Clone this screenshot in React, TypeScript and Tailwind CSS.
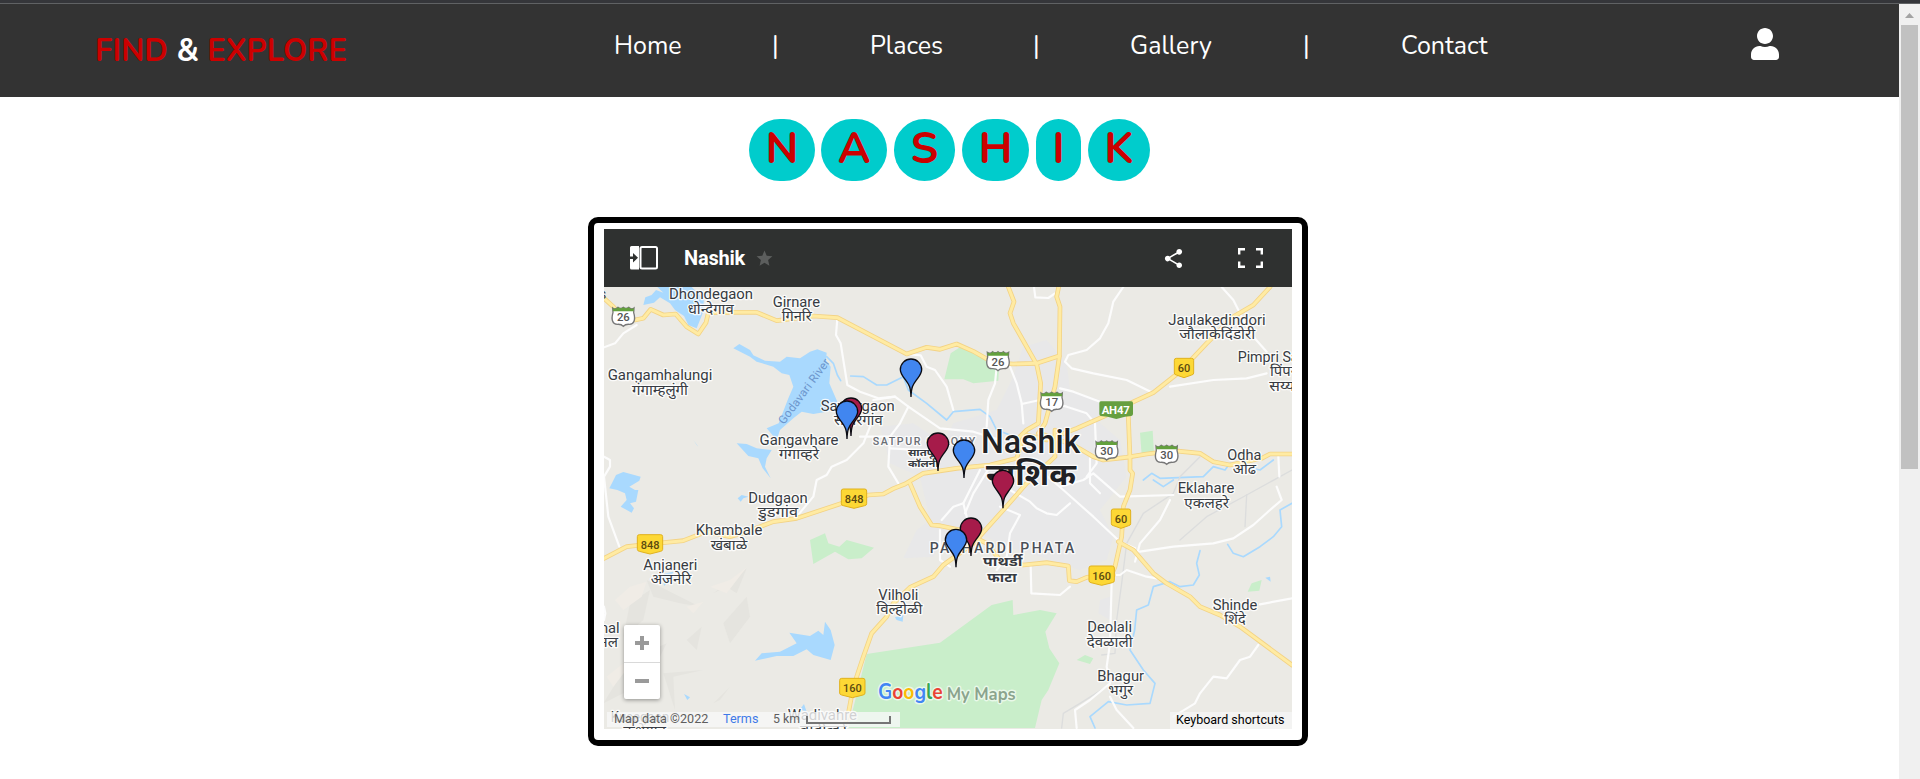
import { FaUser } from "react-icons/fa";
import { MdShare, MdStar } from "react-icons/md";

const water = [
  "190,285 196,262 215,255 228,240 250,248 232,231 335,231 372,268 368,310 350,355 325,345 312,318 285,300 270,280 240,262 222,278",
  "460,415 478,402 510,420 520,436 555,452 600,455 620,440 660,445 690,425 712,418 740,428 738,452 752,470 748,520 772,575 740,605 700,612 665,605 640,625 600,660 590,690 560,655 596,640 625,565 640,530 628,495 605,490 580,470 530,455 510,440",
  "470,700 500,702 530,715 575,720 560,745 555,770 572,805 548,775 535,745 505,738",
  "108,795 130,786 182,800 178,812 148,830 165,840 175,840 168,875 150,880 162,895 155,908 122,890 140,870 135,850 112,840 88,835 98,815",
  "525,1352 545,1330 600,1325 650,1300 628,1268 690,1278 715,1262 730,1275 735,1235 752,1260 764,1305 752,1350 700,1335 680,1318 640,1338 590,1338",
  "473,865 485,855 505,860 490,865 482,875",
  "340,690 355,710 350,705",
  "312,1452 330,1462 322,1470",
  "248,1092 280,1085 270,1110 252,1128",
  "945,1222 970,1215 968,1235 950,1230",
  "2056,1103 2070,1100 2072,1115",
  "660,1498 672,1482 680,1505",
];

const greens = [
  "690,990 735,970 745,1000 778,1010 800,990 882,1013 845,1045 805,1048 765,1025 700,1062",
  "1093,508 1112,430 1140,412 1215,438 1258,452 1255,512 1180,520 1150,508",
  "805,1554 860,1332 1080,1298 1235,1185 1298,1170 1300,1215 1380,1200 1430,1210 1396,1265 1408,1315 1438,1360 1405,1440 1385,1470 1365,1554",
  "1680,668 1718,662 1722,730 1685,735",
  "1490,1350 1515,1335 1540,1345 1530,1362",
  "2003,1145 2015,1120 2045,1110 2038,1142",
];

const urban = [
  "900,650 1000,640 1090,700 1120,640 1250,600 1300,500 1330,410 1400,390 1460,460 1470,540 1560,570 1560,640 1620,690 1640,800 1560,900 1600,980 1580,1050 1500,1080 1380,1040 1280,1010 1180,960 1090,985 1060,1040 970,1045 1010,960 1050,930 1020,800 930,760",
  "1560,1170 1590,1160 1590,1230 1555,1210",
];

const hills = [
  "150,1180 210,1140 190,1230 130,1280",
  "400,1150 500,1075 470,1150 440,1130",
  "430,1240 500,1160 510,1220 450,1300",
  "320,1290 365,1250 350,1320",
  "70,1480 150,1350 260,1300 200,1420 130,1450",
  "250,1390 370,1380 280,1400 285,1500",
  "400,1480 450,1430 420,1470",
  "200,1110 260,1140 360,1190 300,1180 220,1160",
];

const ridges = [
  "105,1170 150,1130 200,1115 185,1160 130,1200",
  "390,1130 450,1110 500,1072 440,1150",
  "320,1190 370,1175 340,1210",
  "80,1400 130,1360 150,1365 100,1430",
];

const streams = [
  "740,440 760,460 772,495 782,512",
  "812,498 850,500 890,525 920,525 970,500 985,540 1040,580 1100,630 1120,605 1200,598 1230,620 1250,660 1290,675",
  "2136,880 2100,900 2105,950 2080,980 2040,1010 1990,1040 1960,1030 1943,1003",
  "1860,1022 1850,1060 1858,1095 1840,1125 1800,1130 1770,1115 1720,1130 1705,1185 1670,1200 1664,1260 1650,1320 1690,1380 1725,1420 1710,1480 1640,1485 1585,1475 1530,1520 1545,1554",
  "1690,810 1715,790 1740,805 1870,800 1900,770 1935,780 1950,760 2040,780 2080,750",
  "1720,810 1750,830 1780,810",
];

const minor = [
  "72,412 105,400 130,370 170,345",
  "772,325 768,375 782,400 802,525 840,545 895,565 945,560 985,590 1080,655 1180,665 1260,690",
  "980,432 1022,436 1040,470 1065,480 1100,530 1120,600",
  "985,590 960,640 930,680 925,770 955,820",
  "945,560 880,570",
  "870,650 850,700 800,750 755,770 740,795 710,810 700,860 650,920",
  "72,740 90,750 90,770 72,800 85,920 118,1010",
  "72,1190 76,1210 72,1230",
  "1362,231 1366,262 1405,264 1425,250",
  "1630,231 1600,275 1585,340 1560,385 1520,420 1465,435 1455,455 1475,475 1540,490 1640,510 1712,545",
  "1770,530 1900,510 2000,505 2060,490",
  "1925,231 1960,270 1990,330 2020,380 2060,425",
  "1250,470 1245,520 1225,570 1220,650",
  "1290,470 1310,520 1325,580 1330,640",
  "1325,582 1380,570 1460,590 1520,610 1545,640 1550,760 1520,800",
  "1440,535 1480,545 1560,575",
  "840,680 930,680",
  "930,715 1020,720 1080,745",
  "1200,780 1150,880 1120,890 1085,930",
  "1150,880 1165,940 1145,990",
  "1230,770 1180,850 1155,910",
  "1290,840 1350,875 1370,895 1400,910 1430,915 1470,880",
  "1260,890 1320,915 1290,970 1280,1040 1250,1080",
  "1380,780 1450,840 1540,920 1620,995 1665,1015",
  "1440,830 1510,810 1540,790 1620,860 1780,855",
  "1770,870 1740,930 1680,1000 1665,1055",
  "1680,1025 1780,1010 1900,1000 1960,985 2020,945 2070,900 2105,870 2090,830",
  "1595,1115 1590,1300 1580,1370 1590,1420",
  "1560,1095 1620,1095 1640,1080 1700,1100 1730,1105",
  "1352,1065 1354,1150 1440,1155 1470,1130",
  "2040,1183 2136,1165",
  "1590,1420 1530,1470 1485,1500 1490,1554",
  "1590,1460 1610,1500 1660,1554",
  "2035,1305 2010,1340 1980,1350 1940,1405 1900,1400 1860,1450 1845,1480 1780,1520",
  "1080,960 1080,1050 1110,1070",
  "1530,745 1530,820 1560,850",
  "2095,740 2098,800",
];

const rails = [
  "2136,780 2000,855 1880,920 1800,990",
  "2000,855 1995,950",
  "1860,740 1830,770 1800,800 1780,850 1690,910 1640,1000 1625,1120 1610,1230 1605,1330 1565,1335",
  "1580,1430 1500,1480 1450,1510 1445,1554",
];

const major = [
  "72,265 100,290 130,325 165,330 190,325 212,298 250,315 287,312 320,350 355,372 378,338 385,308 470,307 530,307 590,332 700,318 772,323 980,432 1040,412 1080,418 1130,402 1180,424 1240,458 1300,462 1370,460 1437,438",
  "1285,231 1302,275 1290,310 1300,340 1370,463 1382,520 1375,640 1340,660 1310,690",
  "1436,231 1430,260 1440,290 1438,440 1425,530 1395,640 1375,670",
  "2070,231 2020,285 1960,320 1880,400 1800,485 1720,548 1650,580 1570,620 1490,655 1400,690 1340,675",
  "72,1045 140,1010 210,1002 310,992 380,965 450,980 500,965 580,935 650,925 800,875 865,855 910,852 940,836 975,822 1030,790 1130,775 1230,765 1310,745 1330,680",
  "990,820 1020,890 1055,945 1080,947 1140,960 1220,1000 1260,1050 1330,1065 1400,1058 1465,1068 1468,1112 1490,1115 1520,1102 1600,1095",
  "1425,660 1425,740 1340,820 1270,900 1180,1000 1090,1065 1060,1100 990,1132 940,1180 920,1220 875,1270 850,1340 820,1430 805,1510 790,1554",
  "1380,670 1480,705 1540,740 1570,750 1640,742 1700,732 1780,722 1860,730 1900,755 1950,765 2045,745 2070,732 2136,732",
  "1645,620 1650,745 1650,780 1658,790 1650,840 1630,890 1625,980 1605,1070 1595,1095",
  "1615,995 1660,1020 1720,1090 1760,1120 1830,1160 1860,1190 1920,1215 1980,1250 2136,1365",
];

type Label = { x: number; y: number; w: number; t: string; s?: number; weight?: number; fill?: string };

/* x is the centre of the label, y its baseline, w its drawn width */
const labels: Label[] = [
  { x: 393, y: 268, w: 252, t: "Dhondegaon" },
  { x: 392, y: 311, w: 138, t: "धोन्देगाव", s: 42 },
  { x: 649, y: 292, w: 142, t: "Girnare" },
  { x: 650, y: 334, w: 90, t: "गिनरि", s: 42 },
  { x: 240, y: 511, w: 314, t: "Gangamhalungi" },
  { x: 240, y: 554, w: 168, t: "गंगाम्हलुंगी", s: 42 },
  { x: 833, y: 602, w: 222, t: "Sawargaon" },
  { x: 835, y: 644, w: 146, t: "सावरगांव", s: 42 },
  { x: 657, y: 704, w: 237, t: "Gangavhare" },
  { x: 657, y: 746, w: 120, t: "गंगाव्हरे", s: 42 },
  { x: 1911, y: 344, w: 292, t: "Jaulakedindori" },
  { x: 1912, y: 387, w: 228, t: "जौलाकेदिंडोरी", s: 42 },
  { x: 2108, y: 456, w: 270, t: "Pimpri Sayyad" },
  { x: 2116, y: 499, w: 92, t: "पिंपरी", s: 42 },
  { x: 2118, y: 544, w: 100, t: "सय्यद", s: 42 },
  { x: 1993, y: 749, w: 102, t: "Odha" },
  { x: 1993, y: 791, w: 70, t: "ओढ", s: 42 },
  { x: 1878, y: 850, w: 170, t: "Eklahare" },
  { x: 1880, y: 893, w: 134, t: "एकलहरे", s: 42 },
  { x: 594, y: 878, w: 178, t: "Dudgaon" },
  { x: 594, y: 921, w: 120, t: "डुडगांव", s: 42 },
  { x: 447, y: 976, w: 200, t: "Khambale" },
  { x: 447, y: 1019, w: 110, t: "खंबाळे", s: 42 },
  { x: 271, y: 1079, w: 162, t: "Anjaneri" },
  { x: 273, y: 1121, w: 122, t: "अंजनेरि", s: 42 },
  { x: 955, y: 1171, w: 120, t: "Vilholi" },
  { x: 958, y: 1213, w: 138, t: "विल्होळी", s: 42 },
  { x: 1965, y: 1199, w: 134, t: "Shinde" },
  { x: 1965, y: 1241, w: 64, t: "शिंदे", s: 42 },
  { x: 1589, y: 1267, w: 134, t: "Deolali" },
  { x: 1589, y: 1311, w: 138, t: "देवळाली", s: 42 },
  { x: 1622, y: 1412, w: 140, t: "Bhagur" },
  { x: 1622, y: 1456, w: 74, t: "भगुर", s: 42 },
  { x: 84, y: 1269, w: 70, t: "inal" },
  { x: 86, y: 1311, w: 56, t: "नल", s: 42 },
  { x: 180, y: 1535, w: 175, t: "Kusegaon" },
  { x: 194, y: 1578, w: 128, t: "कुशेगाव", s: 42 },
  { x: 727, y: 1531, w: 208, t: "Wadivahre" },
  { x: 730, y: 1574, w: 140, t: "वाडीव्हरे", s: 42 },
  { x: 1032, y: 704, w: 308, t: "SATPUR COLONY", s: 32, weight: 500, fill: "#6a6e75" },
  { x: 1030, y: 738, w: 92, t: "सातपूर", s: 30, weight: 700 },
  { x: 1030, y: 771, w: 92, t: "कॉलनी", s: 30, weight: 700 },
  { x: 1266, y: 1028, w: 434, t: "PATHARDI PHATA", s: 42, weight: 500, fill: "#4a4f57" },
  { x: 1268, y: 1069, w: 118, t: "पाथर्डी", s: 40, weight: 700 },
  { x: 1266, y: 1116, w: 88, t: "फाटा", s: 40, weight: 700 },
  { x: 1352, y: 730, w: 298, t: "Nashik", s: 98, weight: 500, fill: "#202125" },
  { x: 1353, y: 826, w: 270, t: "नाशिक", s: 92, weight: 700, fill: "#202125" },
];

const blue = "#4186f0";
const red = "#a61b4a";
const pins = [
  { x: 993, y: 563, c: blue },
  { x: 813, y: 680, c: red },
  { x: 801, y: 689, c: blue },
  { x: 1074, y: 785, c: red },
  { x: 1152, y: 806, c: blue },
  { x: 1269, y: 897, c: red },
  { x: 1173, y: 1040, c: red },
  { x: 1128, y: 1074, c: blue },
];

const usShields = [
  { x: 130, y: 320, t: "26" },
  { x: 1254, y: 453, t: "26" },
  { x: 1415, y: 575, t: "17" },
  { x: 1580, y: 721, t: "30" },
  { x: 1760, y: 734, t: "30" },
];

const yellowShields = [
  { x: 1812, y: 474, w: 58, t: "60" },
  { x: 1623, y: 926, w: 58, t: "60" },
  { x: 822, y: 866, w: 76, t: "848" },
  { x: 210, y: 1003, w: 76, t: "848" },
  { x: 1565, y: 1097, w: 76, t: "160" },
  { x: 817, y: 1434, w: 76, t: "160" },
];

function Lines({ paths, color, width }: { paths: string[]; color: string; width: number }) {
  return (
    <g fill="none" stroke={color} strokeWidth={width} strokeLinejoin="round" strokeLinecap="round">
      {paths.map((p) => (
        <polyline key={p} points={p} />
      ))}
    </g>
  );
}

function Areas({ shapes, color }: { shapes: string[]; color: string }) {
  return (
    <g fill={color}>
      {shapes.map((p) => (
        <polygon key={p} points={p} />
      ))}
    </g>
  );
}

function MapCanvas() {
  return (
    <svg
      className="absolute inset-0 h-full w-full"
      viewBox="72 231 2064 1326"
      preserveAspectRatio="none"
      fontFamily='Roboto, "Noto Sans Devanagari", "Noto Sans", sans-serif'
    >
      <rect x="72" y="231" width="2064" height="1326" fill="#ebeae5" />
      <Areas shapes={hills} color="#e5e4df" />
      <Areas shapes={ridges} color="#f0ece6" />
      <Areas shapes={urban} color="#e8e8e9" />
      <Areas shapes={greens} color="#c9eeca" />
      <Areas shapes={water} color="#a9d9fe" />
      <Lines paths={streams} color="#a9d9fe" width={5} />
      <Lines paths={rails} color="#dcdddd" width={4} />
      <Lines paths={minor} color="#fcfcfc" width={6.5} />
      <Lines paths={major} color="#f3d385" width={14} />
      <Lines paths={major} color="#ffeba3" width={9} />

      {usShields.map((s) => (
        <g key={`${s.x}-${s.y}`} transform={`translate(${s.x} ${s.y})`}>
          <path
            d="M-32-26Q-24-20-16-28Q-8-22 0-28Q8-22 16-28Q24-20 32-26L31-12Q36 4 32 14Q29 23 18 23Q6 22 0 29Q-6 22-18 23Q-29 23-32 14Q-36 4-31-12Z"
            fill="#fff"
            stroke="#777"
            strokeWidth="4"
          />
          <path d="M-32-26Q-24-20-16-28Q-8-22 0-28Q8-22 16-28Q24-20 32-26L31-16H-31Z" fill="#63a03d" />
          <text y="14" textAnchor="middle" fontSize="34" fontWeight="500" fill="#555">
            {s.t}
          </text>
        </g>
      ))}
      {yellowShields.map((s) => (
        <g key={`${s.x}-${s.y}`} transform={`translate(${s.x} ${s.y})`}>
          <path
            d={`M${-s.w / 2 + 6}-29H${s.w / 2 - 6}Q${s.w / 2}-29 ${s.w / 2}-23V15Q${s.w / 2} 20 ${s.w / 2 - 6} 21L0 29L${-s.w / 2 + 6} 21Q${-s.w / 2} 20 ${-s.w / 2} 15V-23Q${-s.w / 2}-29 ${-s.w / 2 + 6}-29Z`}
            fill="#fdd835"
            stroke="#e0b11d"
            strokeWidth="3"
          />
          <text y="13" textAnchor="middle" fontSize="33" fontWeight="500" fill="#5b4a10">
            {s.t}
          </text>
        </g>
      ))}
      <path d="M1562 574H1654Q1659 574 1659 579V612Q1659 617 1654 618L1635 620L1609 627L1583 620L1562 618Q1558 617 1558 612V579Q1558 574 1562 574Z" fill="#669f40" />
      <text x="1607" y="612" textAnchor="middle" fontSize="34" fontWeight="700" fill="#fff" textLength="84">
        AH47
      </text>

      <text transform="translate(612 645) rotate(-53.5)" fontSize="35" fill="#6c95cc" textLength="234">
        Godavari River
      </text>

      {labels.map((l) => (
        <text
          key={`${l.x}-${l.y}`}
          x={l.x}
          y={l.y}
          textAnchor="middle"
          fontSize={l.s ?? 45}
          fontWeight={l.weight ?? 400}
          fill={l.fill ?? "#373b42"}
          stroke="#fff"
          strokeOpacity="0.85"
          strokeWidth="8"
          strokeLinejoin="round"
          paintOrder="stroke"
          textLength={l.w}
          lengthAdjust={l.t.startsWith("SATPUR") || l.t.startsWith("PATH") ? "spacing" : "spacingAndGlyphs"}
        >
          {l.t}
        </text>
      ))}
      <text x="68" y="266" fontSize="42" fill="#3f434a" textAnchor="middle">
        s
      </text>

      {pins.map((p) => (
        <path
          key={`${p.x}-${p.y}`}
          transform={`translate(${p.x} ${p.y})`}
          d="M0-2C-1-36-7-40-20-58C-28-69-32-75-32-84A32 32 0 0 1 32-84C32-75 28-69 20-58C7-40 1-36 0-2Z"
          fill={p.c}
          stroke="#0b0b12"
          strokeWidth="4"
        />
      ))}

      <g stroke="#fff" strokeOpacity="0.6" strokeWidth="9" strokeLinejoin="round" paintOrder="stroke" fontWeight="700" fontFamily="Nunito, Lato, sans-serif">
        <text x="894" y="1467" fontSize="66" textLength="194" lengthAdjust="spacingAndGlyphs">
          <tspan fill="#4285f4">G</tspan>
          <tspan fill="#ea4335">o</tspan>
          <tspan fill="#fbbc05">o</tspan>
          <tspan fill="#4285f4">g</tspan>
          <tspan fill="#34a853">l</tspan>
          <tspan fill="#ea4335">e</tspan>
        </text>
        <text x="1100" y="1469" fontSize="54" textLength="207" lengthAdjust="spacingAndGlyphs" fill="#8ba48d">
          My Maps
        </text>
      </g>
    </svg>
  );
}

function MapFrame() {
  return (
    <div className="ml-[588px] mt-[36px] h-[529px] w-[720px] rounded-[10px] border-[6px] border-black bg-white px-[10px] pt-[6px]">
      <div className="flex h-[58px] items-center bg-[#2f3130] font-['Roboto',sans-serif] text-white">
        <svg className="ml-[26px] h-[24px] w-[28px]" viewBox="0 0 28 24">
          <rect x="10.5" y="1" width="16.5" height="21.5" rx="1.5" fill="none" stroke="#fff" strokeWidth="2" />
          <path d="M1.5 0H9V23.5H1.5Q0 23.5 0 22V13H3V16.5L8 11.7L3 7V10.5H0V1.5Q0 0 1.5 0Z" fill="#fff" />
        </svg>
        <span className="ml-[26px] w-[62px] text-[20px] font-bold tracking-[-0.2px] whitespace-nowrap">Nashik</span>
        <MdStar className="ml-[9px] h-[19px] w-[19px] text-[#5c5e5d]" />
        <MdShare className="ml-[388px] h-[23px] w-[23px]" />
        <svg className="ml-[53px] h-[20px] w-[25px]" viewBox="0 0 25 20" fill="none" stroke="#fff" strokeWidth="2.4">
          <path d="M1.2 6.5V1.2H7M18 1.2H23.8V6.5M23.8 13.5V18.8H18M7 18.8H1.2V13.5" />
        </svg>
      </div>
      <div className="relative h-[442px] overflow-hidden">
        <MapCanvas />
        <div className="absolute left-[20px] top-[338px] flex h-[74px] w-[36px] flex-col rounded-[2px] bg-white shadow-[0_1px_4px_rgba(0,0,0,0.4)]">
          <div className="flex flex-1 items-center justify-center border-b border-[#d9d9d9]">
            <svg className="h-[14px] w-[14px]" viewBox="0 0 14 14">
              <path d="M5 0H9V5H14V9H9V14H5V9H0V5H5Z" fill="#9a9a9a" />
            </svg>
          </div>
          <div className="flex flex-1 items-center justify-center">
            <div className="h-[4px] w-[14px] bg-[#9a9a9a]" />
          </div>
        </div>
        <div className="absolute bottom-[2px] left-[3px] flex h-[15px] w-[293px] items-center bg-[#f8f8f8]/80 pl-[7px] font-['Roboto',sans-serif] text-[12.6px] whitespace-nowrap text-[#5e5e5e]">
          <span className="w-[109px]">Map data ©2022</span>
          <span className="w-[50px] text-[#3f7ae8]">Terms</span>
          <span className="w-[33px] text-[12.3px]">5 km</span>
          <span className="h-[8px] w-[85px] border-2 border-t-0 border-[#757575]" />
        </div>
        <div className="absolute bottom-0 right-0 flex h-[17px] w-[122px] items-center bg-[#f5f5f5]/80 pl-[6px] font-['Roboto',sans-serif] text-[12.5px] whitespace-nowrap text-black">
          Keyboard shortcuts
        </div>
      </div>
    </div>
  );
}

const letters = [
  { t: "N", c: "w-[66px]" },
  { t: "A", c: "w-[66px] ml-[6px]" },
  { t: "S", c: "w-[61px] ml-[7px]" },
  { t: "H", c: "w-[67px] ml-[7px]" },
  { t: "I", c: "w-[45px] ml-[7px]" },
  { t: "K", c: "w-[62px] ml-[7px]" },
];

export default function App() {
  return (
    <div className="flex h-[779px] flex-col overflow-hidden bg-white font-['Nunito','Lato',sans-serif]">
      <div className="h-[4px] shrink-0 border-b border-[#606264] bg-[#35363a]" />
      <div className="flex min-h-0 flex-1">
        <main className="w-[1899px] overflow-hidden">
          <header className="flex h-[93px] items-start bg-[#333333] text-white">
            <h1 className="ml-[95px] mt-[23px] w-[519px] text-[31px] leading-[48px] font-bold whitespace-nowrap text-[#cc0000]">
              FIND <span className="text-white">&amp;</span> EXPLORE
            </h1>
            <nav className="mt-[24px] flex text-[25px] leading-[36px] whitespace-nowrap">
              <a className="w-[158px]">Home</a>
              <span className="w-[98px]">|</span>
              <a className="w-[163px]">Places</a>
              <span className="w-[97px]">|</span>
              <a className="w-[173px]">Gallery</a>
              <span className="w-[98px]">|</span>
              <a className="w-[350px]">Contact</a>
            </nav>
            <FaUser className="mt-[24px] h-[32px] w-[28px]" />
          </header>
          <div className="ml-[749px] mt-[22px] flex h-[62px] text-[44px] leading-[61px] font-bold text-[#cc0000]">
            {letters.map((l) => (
              <span key={l.t} className={`${l.c} rounded-full bg-[#00cccc] text-center`}>
                {l.t}
              </span>
            ))}
          </div>
          <MapFrame />
        </main>
        <aside className="flex w-[21px] flex-col items-center bg-[#f0f0f0]">
          <svg className="mt-[9px] h-[5px] w-[9px]" viewBox="0 0 9 5">
            <path d="M4.5 0L9 5H0Z" fill="#a3a3a3" />
          </svg>
          <div className="mt-[7px] h-[444px] w-[17px] bg-[#c1c1c1]" />
        </aside>
      </div>
    </div>
  );
}
